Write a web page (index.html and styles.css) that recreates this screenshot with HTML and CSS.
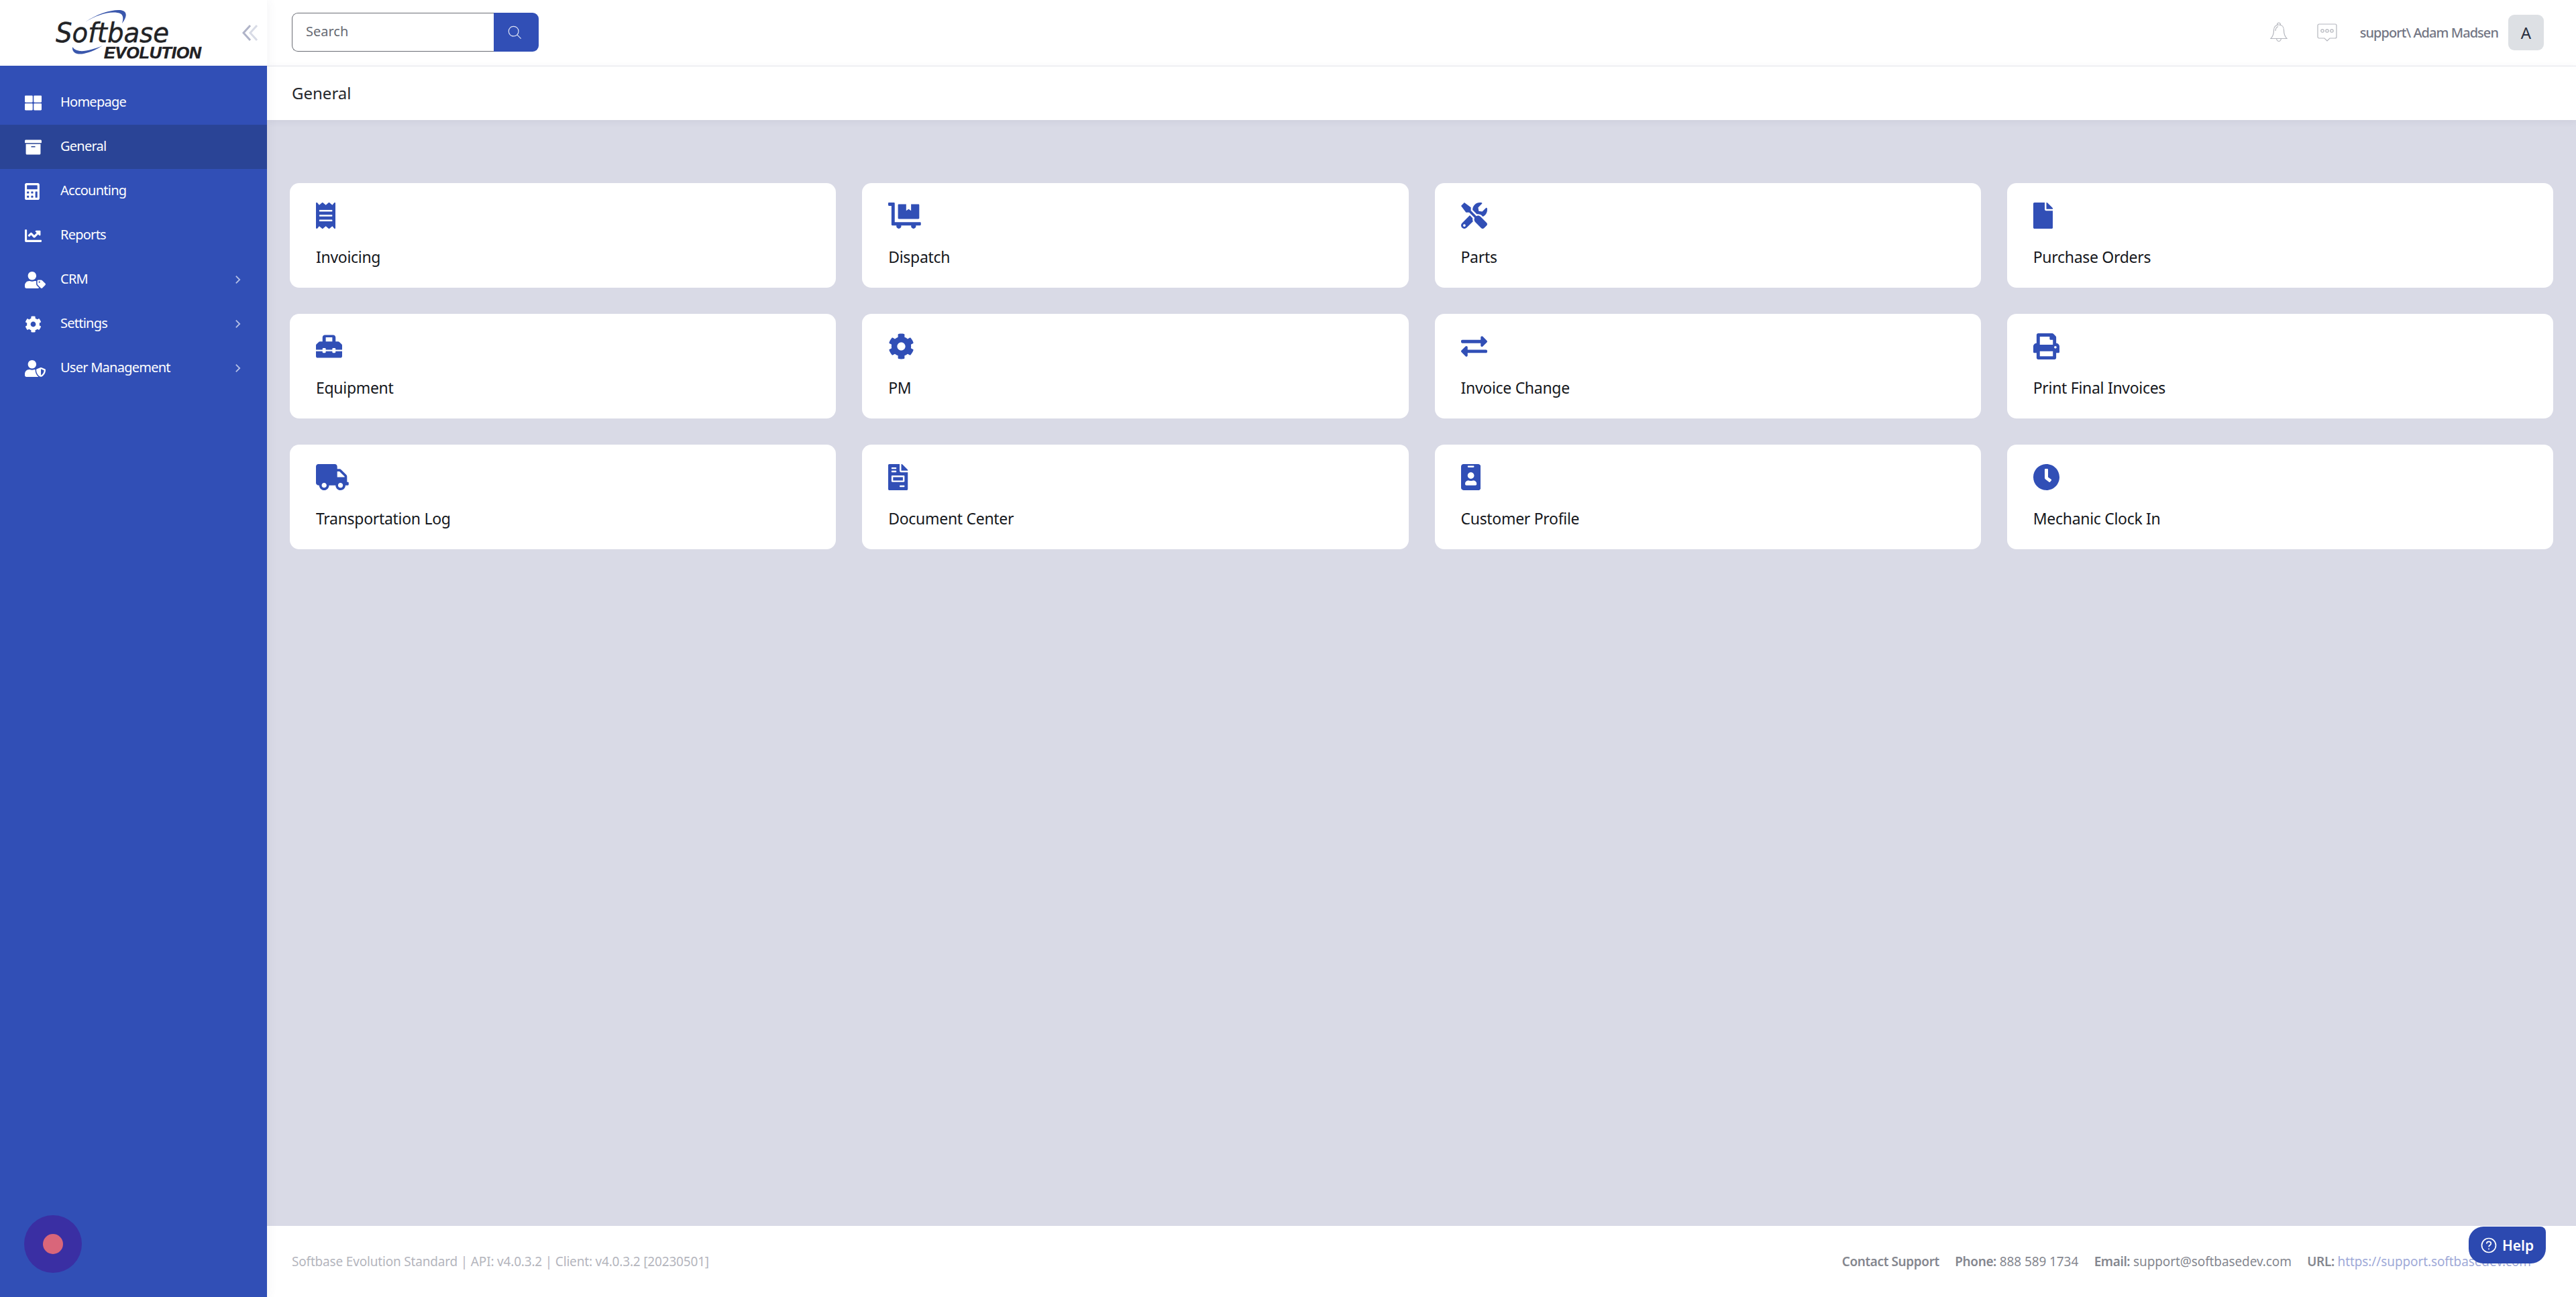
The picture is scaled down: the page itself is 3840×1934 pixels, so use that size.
FILE: index.html
```html
<!DOCTYPE html>
<html lang="en">
<head>
<meta charset="utf-8">
<title>General</title>
<link rel="stylesheet" href="styles.css">
</head>
<body>
<div class="app">
  <aside class="sidebar">
    <div class="brand">
      <svg class="logo" viewBox="0 0 240 80" width="240" height="80" aria-label="Softbase Evolution">
        <path class="swoosh" d="M44 22C62 9 84 3 96 4C106 5 108 12 99 24C102 14 100 9 92 8C78 6 60 12 44 22Z"/>
        <path class="swoosh" d="M25 59C24 68 32 71 42 69C52 67 62 62 70 57C58 62 44 66 36 65C30 64 27 62 25 59Z"/>
        <text class="logo-main" x="0" y="52" textLength="169" lengthAdjust="spacingAndGlyphs">Softbase</text>
        <text class="logo-sub" x="72" y="76" textLength="145" lengthAdjust="spacingAndGlyphs">EVOLUTION</text>
      </svg>
      <svg class="collapse" viewBox="0 0 24 24" width="24" height="24"><path class="collapse-a" d="M12 1L2 12l10 11"/><path class="collapse-b" d="M22 1L12 12l10 11"/></svg>
    </div>
    <nav class="nav">
      <a class="nav-item"><svg class="nav-icon" viewBox="0 0 512 512"><path d="M296 32h192c13.255 0 24 10.745 24 24v160c0 13.255-10.745 24-24 24H296c-13.255 0-24-10.745-24-24V56c0-13.255 10.745-24 24-24zm-80 0H24C10.745 32 0 42.745 0 56v160c0 13.255 10.745 24 24 24h192c13.255 0 24-10.745 24-24V56c0-13.255-10.745-24-24-24zM0 296v160c0 13.255 10.745 24 24 24h192c13.255 0 24-10.745 24-24V296c0-13.255-10.745-24-24-24H24c-13.255 0-24 10.745-24 24zm296 184h192c13.255 0 24-10.745 24-24V296c0-13.255-10.745-24-24-24H296c-13.255 0-24 10.745-24 24v160c0 13.255 10.745 24 24 24z"/></svg><span>Homepage</span></a>
      <a class="nav-item active"><svg class="nav-icon" viewBox="0 0 512 512"><path d="M32 448c0 17.7 14.3 32 32 32h384c17.7 0 32-14.3 32-32V160H32v288zm160-212c0-6.6 5.4-12 12-12h104c6.6 0 12 5.4 12 12v8c0 6.6-5.4 12-12 12H204c-6.6 0-12-5.4-12-12v-8zM480 32H32C14.3 32 0 46.3 0 64v48c0 8.8 7.2 16 16 16h480c8.8 0 16-7.2 16-16V64c0-17.7-14.3-32-32-32z"/></svg><span>General</span></a>
      <a class="nav-item"><svg class="nav-icon" viewBox="0 0 512 512"><path d="M400 0H48C22.4 0 0 22.4 0 48v416c0 25.6 22.4 48 48 48h352c25.6 0 48-22.4 48-48V48c0-25.6-22.4-48-48-48zM128 435c0 6.4-6.4 12.8-12.8 12.8H76.8c-6.4 0-12.8-6.4-12.8-12.8v-38.4c0-6.4 6.4-12.8 12.8-12.8h38.4c6.4 0 12.8 6.4 12.8 12.8V435zm0-128c0 6.4-6.4 12.8-12.8 12.8H76.8c-6.4 0-12.8-6.4-12.8-12.8v-38.4c0-6.4 6.4-12.8 12.8-12.8h38.4c6.4 0 12.8 6.4 12.8 12.8V307zm128 128c0 6.4-6.4 12.8-12.8 12.8h-38.4c-6.4 0-12.8-6.4-12.8-12.8v-38.4c0-6.4 6.4-12.8 12.8-12.8h38.4c6.4 0 12.8 6.4 12.8 12.8V435zm0-128c0 6.4-6.4 12.8-12.8 12.8h-38.4c-6.4 0-12.8-6.4-12.8-12.8v-38.4c0-6.4 6.4-12.8 12.8-12.8h38.4c6.4 0 12.8 6.4 12.8 12.8V307zm128 128c0 6.4-6.4 12.8-12.8 12.8h-38.4c-6.4 0-12.8-6.4-12.8-12.8V268.8c0-6.4 6.4-12.8 12.8-12.8h38.4c6.4 0 12.8 6.4 12.8 12.8V435zm0-256c0 6.4-6.4 12.8-12.8 12.8H76.8c-6.4 0-12.8-6.4-12.8-12.8V76.8C64 70.4 70.4 64 76.8 64h294.4c6.4 0 12.8 6.4 12.8 12.8V179z"/></svg><span>Accounting</span></a>
      <a class="nav-item"><svg class="nav-icon" viewBox="0 0 512 512"><path d="M496 384H64V80c0-8.84-7.16-16-16-16H16C7.16 64 0 71.16 0 80v336c0 17.67 14.33 32 32 32h464c8.84 0 16-7.16 16-16v-32c0-8.84-7.16-16-16-16zM464 96H345.94c-21.38 0-32.09 25.85-16.97 40.97l32.4 32.4L288 242.75l-73.37-73.37c-12.5-12.5-32.76-12.5-45.25 0l-68.69 68.69c-6.25 6.25-6.25 16.38 0 22.63l22.62 22.62c6.25 6.25 16.38 6.25 22.63 0L192 237.25l73.37 73.37c12.5 12.5 32.76 12.5 45.25 0l96-96 32.4 32.4c15.12 15.12 40.97 4.41 40.97-16.97V112c.01-8.84-7.15-16-15.99-16z"/></svg><span>Reports</span></a>
      <a class="nav-item"><svg class="nav-icon wide" viewBox="0 0 640 512"><path d="M630.6 364.9l-90.3-90.2c-12-12-28.3-18.7-45.3-18.7h-79.3c-17.7 0-32 14.3-32 32v79.2c0 17 6.7 33.2 18.7 45.2l90.3 90.2c12.5 12.5 32.8 12.5 45.3 0l92.5-92.5c12.6-12.5 12.6-32.7.1-45.2zm-182.8-21c-13.3 0-24-10.7-24-24s10.7-24 24-24 24 10.7 24 24c0 13.2-10.7 24-24 24zm-223.8-88c70.7 0 128-57.3 128-128C352 57.3 294.7 0 224 0S96 57.3 96 128c0 70.6 57.3 128 128 128zm127.8 111.2V294c-12.2-3.6-24.9-6.2-38.2-6.2h-16.7c-22.2 10.2-46.9 16-72.9 16s-50.6-5.8-72.9-16h-16.7C60.2 288 0 348.2 0 422.4V464c0 26.5 21.5 48 48 48h352c15.5 0 29.1-7.5 37.9-18.9l-58-58c-18.1-18.1-28.1-42.2-28.1-67.9z"/></svg><span>CRM</span><svg class="nav-chevron" viewBox="0 0 10 14"><path d="M2 1l6 6-6 6"/></svg></a>
      <a class="nav-item"><svg class="nav-icon" viewBox="0 0 512 512"><path d="M487.4 315.7l-42.6-24.6c4.3-23.2 4.3-47 0-70.2l42.6-24.6c4.9-2.8 7.1-8.6 5.5-14-11.1-35.6-30-67.8-54.7-94.6-3.8-4.1-10-5.1-14.8-2.3L380.8 110c-17.9-15.4-38.5-27.3-60.8-35.1V25.8c0-5.6-3.9-10.5-9.4-11.7-36.7-8.2-74.3-7.8-109.2 0-5.5 1.2-9.4 6.1-9.4 11.7V75c-22.2 7.9-42.8 19.8-60.8 35.1L88.7 85.5c-4.9-2.8-11-1.9-14.8 2.3-24.7 26.7-43.6 58.9-54.7 94.6-1.7 5.4.6 11.2 5.5 14L67.3 221c-4.3 23.2-4.3 47 0 70.2l-42.6 24.6c-4.9 2.8-7.1 8.6-5.5 14 11.1 35.6 30 67.8 54.7 94.6 3.8 4.1 10 5.1 14.8 2.3l42.6-24.6c17.9 15.4 38.5 27.3 60.8 35.1v49.2c0 5.6 3.9 10.5 9.4 11.7 36.7 8.2 74.3 7.8 109.2 0 5.5-1.2 9.4-6.1 9.4-11.7v-49.2c22.2-7.9 42.8-19.8 60.8-35.1l42.6 24.6c4.9 2.8 11 1.9 14.8-2.3 24.7-26.7 43.6-58.9 54.7-94.6 1.5-5.5-.7-11.3-5.6-14.1zM256 336c-44.1 0-80-35.9-80-80s35.9-80 80-80 80 35.9 80 80-35.9 80-80 80z"/></svg><span>Settings</span><svg class="nav-chevron" viewBox="0 0 10 14"><path d="M2 1l6 6-6 6"/></svg></a>
      <a class="nav-item"><svg class="nav-icon wide" viewBox="0 0 640 512"><path d="M622.3 271.1l-115.2-45c-4.1-1.6-12.6-3.7-22.2 0l-115.2 45c-10.7 4.2-17.7 14-17.7 24.9 0 111.6 68.7 188.8 132.9 213.9 9.6 3.7 18 1.6 22.2 0C558.4 489.9 640 420.5 640 296c0-10.9-7-20.7-17.7-24.9zM496 462.4V273.3l95.5 37.3c-5.6 87.1-60.9 135.4-95.5 151.8zM224 256c70.7 0 128-57.3 128-128S294.7 0 224 0 96 57.3 96 128s57.3 128 128 128zm96 40c0-2.5.8-4.8 1.1-7.2-2.5-.1-4.9-.8-7.5-.8h-16.7c-22.2 10.2-46.9 16-72.9 16s-50.6-5.8-72.9-16h-16.7C60.2 288 0 348.2 0 422.4V464c0 26.5 21.5 48 48 48h352c6.8 0 13.3-1.5 19.2-4-54-42.9-99.2-116.7-99.2-212z"/></svg><span>User Management</span><svg class="nav-chevron" viewBox="0 0 10 14"><path d="M2 1l6 6-6 6"/></svg></a>
    </nav>
    <div class="recorder"><span class="recorder-dot"></span></div>
  </aside>

  <div class="main">
    <header class="topbar">
      <form class="search">
        <div class="search-input">Search</div>
        <div class="search-btn"><svg viewBox="0 0 24 24" width="22" height="22"><circle cx="10.5" cy="10.5" r="8"/><path d="M16.5 16.5l6 6"/></svg></div>
      </form>
      <div class="user-area">
        <svg class="bell" viewBox="0 0 26 30" width="26" height="30"><path d="M10.5 4.5C10.5 2.5 11.5 1 13 1s2.5 1.5 2.5 3.5M13 4c-4.5 0-7.5 3-7.5 8 0 6-1 9-4.5 12.5h24C21.500 21 20.500 18 20.500 12c0-5-3-8-7.500-8zM9.500 24.500c.5 2.500 2 4 3.500 4s3-1.500 3.500-4"/><path d="M8 13c0-3 1.500-5.500 4-6.500"/></svg>
        <svg class="chat" viewBox="0 0 30 27" width="30" height="27"><path d="M3 1h24a2 2 0 0 1 2 2v17a2 2 0 0 1-2 2h-8l-4 4-4-4H3a2 2 0 0 1-2-2V3a2 2 0 0 1 2-2z"/><circle cx="8" cy="11" r="2.200"/><circle cx="15" cy="11" r="2.200"/><circle cx="22" cy="11" r="2.200"/></svg>
        <span class="user-name">support\ Adam Madsen</span>
        <span class="avatar">A</span>
      </div>
    </header>
    <div class="titlebar">General</div>

    <main class="content">
      <div class="card-grid">
        <a class="card"><svg class="card-icon" viewBox="0 0 384 512"><path d="M358.4 3.2L320 48 265.600 3.2a15.900 15.900 0 0 0-19.200 0L192 48 137.600 3.2a15.900 15.900 0 0 0-19.200 0L64 48 25.600 3.2C15-4.700 0 2.800 0 16v480c0 13.200 15 20.700 25.600 12.800L64 464l54.400 44.800a15.900 15.900 0 0 0 19.200 0L192 464l54.400 44.800a15.900 15.900 0 0 0 19.200 0L320 464l38.400 44.800c10.500 7.900 25.600.4 25.600-12.800V16c0-13.200-15-20.700-25.600-12.800zM320 360c0 4.400-3.600 8-8 8H72c-4.400 0-8-3.600-8-8v-16c0-4.400 3.600-8 8-8h240c4.400 0 8 3.600 8 8v16zm0-96c0 4.400-3.600 8-8 8H72c-4.400 0-8-3.600-8-8v-16c0-4.400 3.600-8 8-8h240c4.400 0 8 3.600 8 8v16zm0-96c0 4.400-3.600 8-8 8H72c-4.400 0-8-3.600-8-8v-16c0-4.400 3.600-8 8-8h240c4.400 0 8 3.600 8 8v16z"/></svg><span>Invoicing</span></a>
        <a class="card"><svg class="card-icon" viewBox="0 0 640 512"><path d="M208 320h384c8.800 0 16-7.200 16-16V48c0-8.800-7.200-16-16-16H448v128l-48-32-48 32V32H208c-8.800 0-16 7.200-16 16v256c0 8.800 7.200 16 16 16zm416 64H128V16c0-8.800-7.200-16-16-16H16C7.200 0 0 7.200 0 16v32c0 8.800 7.200 16 16 16h48v368c0 8.800 7.200 16 16 16h82.900c-1.800 5-2.900 10.400-2.900 16 0 26.500 21.500 48 48 48s48-21.500 48-48c0-5.600-1.200-11-2.900-16H451c-1.800 5-2.900 10.400-2.900 16 0 26.500 21.500 48 48 48s48-21.500 48-48c0-5.600-1.200-11-2.900-16H624c8.800 0 16-7.200 16-16v-32c0-8.800-7.200-16-16-16z"/></svg><span>Dispatch</span></a>
        <a class="card"><svg class="card-icon" viewBox="0 0 512 512"><path d="M501.100 395.700L384 278.600c-23.100-23.100-57.600-27.600-85.400-13.900L192 158.100V96L64 0 0 64l96 128h62.100l106.600 106.600c-13.600 27.800-9.200 62.300 13.900 85.400l117.100 117.100c14.600 14.600 38.200 14.600 52.700 0l52.700-52.700c14.500-14.600 14.500-38.200 0-52.700zM331.700 225c28.300 0 54.900 11 74.900 31l19.400 19.400c15.800-6.900 30.800-16.500 43.800-29.500 37.100-37.100 49.700-89.300 37.900-136.700-2.200-9-13.500-12.100-20.100-5.500l-74.400 74.400-67.900-11.300L334 98.900l74.400-74.400c6.600-6.600 3.400-17.900-5.700-20.200-47.400-11.700-99.600.9-136.600 37.900-28.500 28.500-41.900 66.100-41.200 103.600l82.100 82.100c8.100-1.900 16.500-2.900 24.700-2.900zm-103.900 82l-56.700-56.700L18.700 402.800c-25 25-25 65.500 0 90.500s65.500 25 90.500 0l123.600-123.600c-7.600-19.900-9.900-41.600-5-62.700zM64 472c-13.200 0-24-10.800-24-24 0-13.300 10.700-24 24-24s24 10.700 24 24c0 13.200-10.700 24-24 24z"/></svg><span>Parts</span></a>
        <a class="card"><svg class="card-icon" viewBox="0 0 384 512"><path d="M224 136V0H24C10.700 0 0 10.700 0 24v464c0 13.300 10.700 24 24 24h336c13.300 0 24-10.700 24-24V160H248c-13.200 0-24-10.800-24-24zm160-14.100v6.100H256V0h6.100c6.400 0 12.500 2.500 17 7l97.900 98c4.500 4.500 7 10.600 7 16.900z"/></svg><span>Purchase Orders</span></a>

        <a class="card"><svg class="card-icon" viewBox="0 0 512 512"><path d="M502.630 214.630l-45.250-45.250c-6-6-14.140-9.370-22.630-9.370H384V80c0-26.510-21.490-48-48-48H176c-26.510 0-48 21.490-48 48v80H77.250c-8.490 0-16.620 3.370-22.630 9.370L9.370 214.630c-6 6-9.370 14.140-9.370 22.630V320h128v-16c0-8.840 7.160-16 16-16h32c8.840 0 16 7.160 16 16v16h128v-16c0-8.840 7.160-16 16-16h32c8.840 0 16 7.160 16 16v16h128v-82.750c0-8.480-3.370-16.620-9.370-22.620zM320 160H192V80h128v80zm64 208c0 8.840-7.160 16-16 16h-32c-8.840 0-16-7.160-16-16v-16H192v16c0 8.840-7.160 16-16 16h-32c-8.840 0-16-7.160-16-16v-16H0v96c0 17.670 14.330 32 32 32h448c17.670 0 32-14.330 32-32v-96H384v16z"/></svg><span>Equipment</span></a>
        <a class="card"><svg class="card-icon" viewBox="0 0 512 512"><path d="M487.400 315.700l-42.600-24.600c4.300-23.200 4.300-47 0-70.200l42.600-24.600c4.900-2.800 7.100-8.600 5.500-14-11.100-35.600-30-67.800-54.700-94.600-3.800-4.100-10-5.100-14.800-2.300L380.800 110c-17.900-15.400-38.500-27.300-60.800-35.100V25.800c0-5.600-3.900-10.500-9.400-11.700-36.700-8.200-74.300-7.800-109.200 0-5.500 1.200-9.400 6.100-9.400 11.700V75c-22.200 7.900-42.800 19.800-60.800 35.100L88.700 85.500c-4.900-2.800-11-1.900-14.800 2.300-24.700 26.700-43.600 58.900-54.700 94.600-1.700 5.400.6 11.200 5.500 14L67.300 221c-4.300 23.200-4.300 47 0 70.200l-42.600 24.600c-4.900 2.800-7.100 8.600-5.500 14 11.100 35.600 30 67.800 54.700 94.600 3.800 4.100 10 5.100 14.800 2.300l42.600-24.600c17.900 15.400 38.500 27.300 60.800 35.100v49.200c0 5.600 3.900 10.500 9.400 11.700 36.700 8.200 74.300 7.800 109.200 0 5.500-1.200 9.400-6.100 9.400-11.700v-49.200c22.200-7.900 42.800-19.800 60.800-35.100l42.600 24.600c4.900 2.800 11 1.900 14.800-2.300 24.700-26.700 43.600-58.900 54.700-94.600 1.500-5.500-.7-11.300-5.600-14.100zM256 336c-44.100 0-80-35.900-80-80s35.900-80 80-80 80 35.900 80 80-35.900 80-80 80z"/></svg><span>PM</span></a>
        <a class="card"><svg class="card-icon" viewBox="0 0 512 512"><path d="M0 168v-16c0-13.255 10.745-24 24-24h360V80c0-21.367 25.899-32.042 40.971-16.971l80 80c9.372 9.373 9.372 24.569 0 33.941l-80 80C409.956 271.982 384 261.456 384 240v-48H24c-13.255 0-24-10.745-24-24zm488 152H128v-48c0-21.314-25.862-32.080-40.971-16.971l-80 80c-9.372 9.373-9.372 24.569 0 33.941l80 80C102.057 463.997 128 453.437 128 432v-48h360c13.255 0 24-10.745 24-24v-16c0-13.255-10.745-24-24-24z"/></svg><span>Invoice Change</span></a>
        <a class="card"><svg class="card-icon" viewBox="0 0 512 512"><path d="M448 192V77.250c0-8.490-3.370-16.620-9.370-22.630L393.370 9.370c-6-6-14.140-9.370-22.630-9.370H96C78.330 0 64 14.330 64 32v160c-35.350 0-64 28.650-64 64v112c0 8.840 7.160 16 16 16h48v96c0 17.670 14.330 32 32 32h320c17.670 0 32-14.330 32-32v-96h48c8.840 0 16-7.160 16-16V256c0-35.350-28.650-64-64-64zm-64 256H128v-96h256v96zm0-224H128V64h192v48c0 8.840 7.160 16 16 16h48v96zm48 72c-13.250 0-24-10.750-24-24 0-13.260 10.750-24 24-24s24 10.740 24 24c0 13.250-10.750 24-24 24z"/></svg><span>Print Final Invoices</span></a>

        <a class="card"><svg class="card-icon" viewBox="0 0 640 512"><path d="M624 352h-16V243.900c0-12.700-5.100-24.900-14.100-33.900L494 110.100c-9-9-21.200-14.100-33.900-14.100H416V48c0-26.500-21.500-48-48-48H48C21.500 0 0 21.500 0 48v320c0 26.500 21.500 48 48 48h16c0 53 43 96 96 96s96-43 96-96h128c0 53 43 96 96 96s96-43 96-96h48c8.800 0 16-7.200 16-16v-32c0-8.800-7.200-16-16-16zM160 464c-26.500 0-48-21.500-48-48s21.500-48 48-48 48 21.500 48 48-21.500 48-48 48zm320 0c-26.500 0-48-21.500-48-48s21.500-48 48-48 48 21.500 48 48-21.500 48-48 48zm80-208H416V144h44.100l99.900 99.900V256z"/></svg><span>Transportation Log</span></a>
        <a class="card"><svg class="card-icon" viewBox="0 0 384 512"><path d="M288 256H96v64h192v-64zm89-151L279.100 7c-4.500-4.500-10.600-7-17-7H256v128h128v-6.100c0-6.300-2.500-12.400-7-16.900zm-153 31V0H24C10.700 0 0 10.700 0 24v464c0 13.300 10.700 24 24 24h336c13.300 0 24-10.700 24-24V160H248c-13.200 0-24-10.800-24-24zM64 72c0-4.420 3.580-8 8-8h80c4.420 0 8 3.580 8 8v16c0 4.420-3.580 8-8 8H72c-4.420 0-8-3.580-8-8V72zm0 64c0-4.420 3.580-8 8-8h80c4.420 0 8 3.580 8 8v16c0 4.420-3.580 8-8 8H72c-4.420 0-8-3.580-8-8v-16zm256 304c0 4.420-3.580 8-8 8h-80c-4.420 0-8-3.580-8-8v-16c0-4.420 3.580-8 8-8h80c4.420 0 8 3.580 8 8v16zm0-200v96c0 8.840-7.160 16-16 16H80c-8.840 0-16-7.160-16-16v-96c0-8.840 7.160-16 16-16h224c8.840 0 16 7.160 16 16z"/></svg><span>Document Center</span></a>
        <a class="card"><svg class="card-icon" viewBox="0 0 384 512"><path d="M336 0H48C21.500 0 0 21.500 0 48v416c0 26.500 21.500 48 48 48h288c26.500 0 48-21.500 48-48V48c0-26.500-21.500-48-48-48zM144 32h96c8.800 0 16 7.200 16 16s-7.200 16-16 16h-96c-8.800 0-16-7.200-16-16s7.200-16 16-16zm48 128c35.300 0 64 28.700 64 64s-28.700 64-64 64-64-28.700-64-64 28.700-64 64-64zm112 236.800c0 10.600-10 19.200-22.400 19.200H102.400C90 416 80 407.400 80 396.800v-19.200c0-31.800 30.100-57.600 67.200-57.600h5c12.300 5.100 25.700 8 39.800 8s27.600-2.900 39.800-8h5c37.100 0 67.200 25.800 67.200 57.600v19.200z"/></svg><span>Customer Profile</span></a>
        <a class="card"><svg class="card-icon" viewBox="8 8 496 496"><path d="M256,8C119,8,8,119,8,256S119,504,256,504,504,393,504,256,393,8,256,8Zm92.490,313h0l-20,25a16,16,0,0,1-22.490,2.500h0l-67-49.720a40,40,0,0,1-15-31.230V112a16,16,0,0,1,16-16h32a16,16,0,0,1,16,16V256l58,42.500A16,16,0,0,1,348.490,321Z"/></svg><span>Mechanic Clock In</span></a>
      </div>
    </main>

    <footer class="footer">
      <span class="version">Softbase Evolution Standard | API: v4.0.3.2 | Client: v4.0.3.2 [20230501]</span>
      <div class="support">
        <b>Contact Support</b>
        <span><b>Phone:</b> 888 589 1734</span>
        <span><b>Email:</b> support@softbasedev.com</span>
        <span><b>URL:</b> <a class="support-link">https://support.softbasedev.com</a></span>
      </div>
    </footer>
  </div>
</div>
<div class="help"><svg viewBox="0 0 24 24" width="24" height="24"><circle cx="12" cy="12" r="10.500"/><path d="M8.800 9.500c0-2 1.500-3.200 3.300-3.200s3.200 1.100 3.200 2.900c0 2.500-3.300 2.500-3.300 5"/><path d="M12 16.500v1.800"/></svg><span>Help</span></div>
</body>
</html>
```

FILE: styles.css
```css
* { box-sizing: border-box; }
html, body { margin: 0; height: 100%; overflow: hidden; }
body { font-family: "Noto Sans", "Open Sans", sans-serif; color: #1d2029; background: #fff; }
a { color: inherit; text-decoration: none; }

.app { display: flex; height: 100vh; }

.sidebar { position: relative; z-index: 2; flex: 0 0 398px; width: 398px; display: flex; flex-direction: column; background: #314fb6; box-shadow: 2px 0 14px rgba(60, 60, 100, 0.06); }
.brand { height: 98px; flex: none; background: #fff; display: flex; align-items: flex-start; padding: 11px 0 0 83px; }
.logo { flex: none; display: block; }
.logo-main { font-family: "DejaVu Sans", sans-serif; font-style: italic; font-size: 40px; fill: #222326; stroke: #222326; stroke-width: 0.5px; }
.logo-sub { font-family: "Liberation Sans", sans-serif; font-style: italic; font-weight: 700; font-size: 24px; fill: #1f2023; stroke: #1f2023; stroke-width: 0.6px; }
.swoosh { fill: #3a57ac; }
.collapse { flex: none; margin: 26px 0 0 38px; fill: none; stroke-width: 3; }
.collapse-a { stroke: #b0b4c8; }
.collapse-b { stroke: #d8dbe6; }

.nav { padding-top: 22px; display: flex; flex-direction: column; }
.nav-item { height: 66px; display: flex; align-items: center; padding-left: 37px; color: #fff; font-size: 20px; position: relative; }
.nav-item span { position: absolute; left: 90px; top: 18px; line-height: 28px; letter-spacing: -0.75px; }
.nav-item.active { background: #2a4496; }
.nav-icon { width: 25px; height: 25px; fill: #fff; display: block; }
.nav-icon.wide { width: 31px; }
.nav-chevron { position: absolute; left: 350px; width: 9px; height: 14px; fill: none; stroke: #b5c0e6; stroke-width: 2; }

.recorder { position: absolute; left: 36px; top: 1812px; width: 86px; height: 86px; border-radius: 50%; background: #3a2fa3; display: flex; align-items: center; justify-content: center; }
.recorder-dot { width: 30px; height: 30px; border-radius: 50%; background: #d9667a; }

.main { flex: 1; min-width: 0; display: flex; flex-direction: column; }

.topbar { height: 99px; flex: none; display: flex; align-items: center; justify-content: space-between; padding: 0 48px 2px 37px; background: #fff; border-bottom: 1px solid #e8e9ef; }
.search { display: flex; height: 58px; margin: 0; }
.search-input { width: 301px; height: 58px; border: 1px solid #6a6d75; border-right: 0; border-radius: 9px 0 0 9px; padding-left: 20px; display: flex; align-items: center; font-size: 20px; color: #666a73; padding-bottom: 4px; }
.search-btn { width: 67px; background: #314fb6; border-radius: 0 9px 9px 0; padding-right: 6px; display: flex; align-items: center; justify-content: center; fill: none; stroke: #dfe4f5; stroke-width: 1.300; }

.user-area { display: flex; align-items: center; }
.bell { fill: none; stroke: #b4b6bd; stroke-width: 1.200; margin-right: 44px; }
.chat { fill: none; stroke: #b4b6bd; stroke-width: 1.200; margin-right: 34px; }
.user-name { font-size: 20px; font-weight: 500; color: #737684; letter-spacing: -0.95px; margin-right: 15px; }
.avatar { width: 53px; height: 53px; border-radius: 9px; background: #dde0e4; display: flex; align-items: center; justify-content: center; font-size: 24px; color: #2a3040; }

.titlebar { height: 80px; flex: none; display: flex; align-items: center; padding: 0 37px 1px; background: #fff; font-size: 24px; color: #25272c; box-shadow: 0 2px 10px rgba(60, 60, 100, 0.08); position: relative; }

.content { flex: 1; min-height: 0; padding: 94px 34px 0; background: #d9dae6; }
.card-grid { display: grid; grid-template-columns: repeat(4, 1fr); gap: 39px; }
.card { height: 156px; background: #fff; border-radius: 14px; padding: 29px 39px 0; display: flex; flex-direction: column; align-items: flex-start; font-size: 23px; letter-spacing: -0.3px; color: #15171c; }
.card-icon { height: 39px; width: auto; flex: none; fill: #314fb6; display: block; margin-bottom: 26px; }

.footer { height: 106px; flex: none; background: #fff; display: flex; align-items: center; justify-content: space-between; padding: 0 67px 0 37px; font-size: 19px; color: #b4b5bd; }
.version { letter-spacing: -0.18px; }
.support { display: flex; gap: 23.5px; color: #85878f; letter-spacing: -0.1px; }
.support b { font-weight: 600; letter-spacing: -0.4px; }
.support-link { color: #a0aad8; }

.help { position: fixed; left: 3680px; top: 1829px; width: 115px; height: 55px; border-radius: 22px 8px 22px 22px; background: #2c49b0; color: #fff; display: flex; align-items: center; justify-content: center; gap: 8px; font-size: 21px; font-weight: 600; }
.help svg { fill: none; stroke: #fff; stroke-width: 1.700; }
```
